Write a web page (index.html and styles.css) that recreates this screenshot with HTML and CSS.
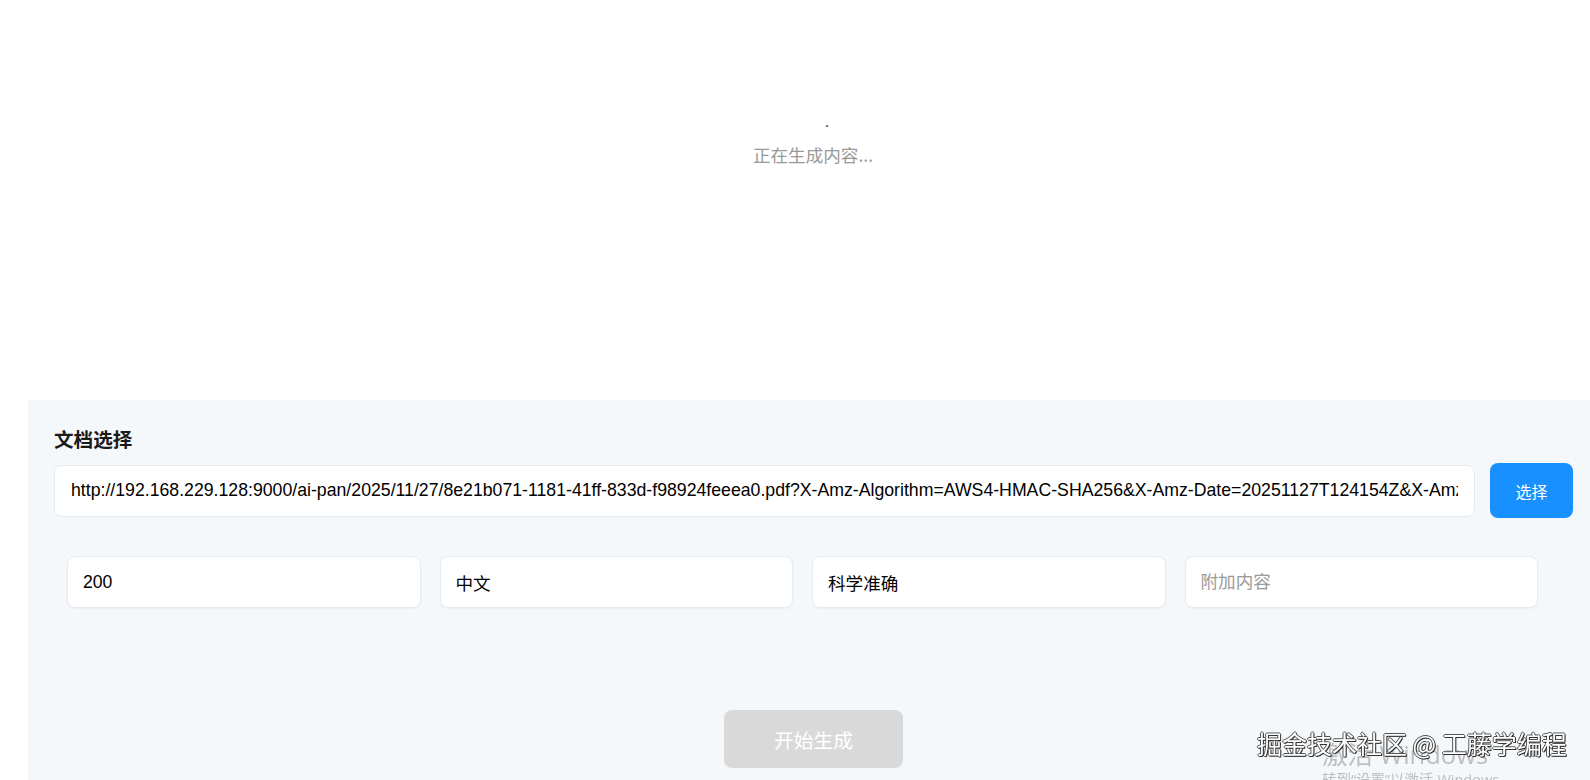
FILE: index.html
```html
<!DOCTYPE html>
<html lang="zh-CN">
<head>
<meta charset="UTF-8" />
<meta name="viewport" content="width=device-width, initial-scale=1" />
<title>生成内容</title>
<link rel="stylesheet" href="styles.css">
</head>
<body>
  <div class="result-area">
    <div class="loading-dots">.</div>
    <div class="loading-text">正在生成内容...</div>
  </div>

  <div class="form-panel">
    <div class="field-label">文档选择</div>
    <div class="doc-row">
      <input class="doc-input" type="text" readonly value="http://192.168.229.128:9000/ai-pan/2025/11/27/8e21b071-1181-41ff-833d-f98924feeea0.pdf?X-Amz-Algorithm=AWS4-HMAC-SHA256&amp;X-Amz-Date=20251127T124154Z&amp;X-Amz-SignedHeaders=host&amp;X-Amz-Expires=3600" />
      <button class="pick-btn">选择</button>
    </div>

    <div class="options-row">
      <input class="opt-input" type="text" value="200" />
      <input class="opt-input" type="text" value="中文" />
      <input class="opt-input" type="text" value="科学准确" />
      <input class="opt-input" type="text" placeholder="附加内容" />
    </div>

    <div class="submit-row">
      <button class="start-btn" disabled>开始生成</button>
    </div>
  </div>

  <div class="wm-juejin">掘金技术社区 @ 工藤学编程</div>
  <div class="wm-activate">
    <div class="wm-title">激活 Windows</div>
    <div class="wm-sub">转到“设置”以激活 Windows。</div>
  </div>
</body>
</html>
```

FILE: styles.css
```css
body {
  font-family: "Liberation Sans", Arial, "Noto Sans CJK SC", sans-serif;
  background: #fff;
  color: #000;
  margin: 0;
  overflow: hidden;
}
.result-area {
  height: 400px;
  box-sizing: border-box;
  margin-left: 28px;
  padding: 110px 0 0 8px;
  text-align: center;
}
.loading-dots {
  font-size: 16px;
  line-height: 24px;
  color: #333;
  padding-left: 28px;
}
.loading-text {
  margin-top: 8px;
  font-family: "Noto Sans CJK SC", sans-serif;
  font-size: 17.6px;
  line-height: 26px;
  color: #999;
}
.form-panel {
  margin-left: 28px;
  background: #f5f8fb;
  padding: 26px 17px 40px 26px;
  height: 500px;
}
.field-label {
  font-family: "Noto Sans CJK SC", sans-serif;
  font-size: 19.6px;
  font-weight: 600;
  line-height: 26px;
  color: #1a1a1a;
}
.doc-row {
  display: flex;
  align-items: center;
  gap: 15px;
  margin-top: 11px;
}
.doc-input {
  flex: 1;
  min-width: 0;
  height: 52px;
  box-sizing: border-box;
  padding: 0 16px;
  border: 1px solid #e6eaef;
  border-radius: 8px;
  background: #fff;
  font-family: "Liberation Sans", Arial, sans-serif;
  font-size: 17.7px;
  color: #000;
  outline: none;
}
.pick-btn {
  width: 83px;
  height: 55px;
  border: none;
  border-radius: 8px;
  background: #1890ff;
  color: #fff;
  font-family: "Noto Sans CJK SC", sans-serif;
  font-size: 16px;
  cursor: pointer;
}
.options-row {
  display: grid;
  grid-template-columns: repeat(4, 1fr);
  gap: 19px;
  margin: 38px 35px 0 13px;
}
.opt-input {
  min-width: 0;
  height: 52px;
  box-sizing: border-box;
  padding: 0 15px;
  border: 1px solid #e8ebef;
  border-radius: 8px;
  background: #fff;
  box-shadow: 0 1px 2px rgba(0, 0, 0, 0.04);
  font-family: "Liberation Sans", Arial, "Noto Sans CJK SC", sans-serif;
  font-size: 17.6px;
  color: #000;
  outline: none;
}
.opt-input::placeholder {
  color: #9a9a9a;
}
.submit-row {
  display: flex;
  justify-content: center;
  margin-top: 102px;
}
.start-btn {
  width: 179px;
  height: 58px;
  border: none;
  border-radius: 8px;
  background: #d9d9d9;
  color: #fff;
  font-family: "Noto Sans CJK SC", sans-serif;
  font-size: 19.8px;
}

/* overlays drawn on top of the page */
.wm-activate {
  position: fixed;
  left: 1322px;
  top: 739px;
  color: rgba(140, 140, 140, 0.55);
  font-family: "Open Sans", "Noto Sans CJK SC", sans-serif;
  white-space: nowrap;
}
.wm-title {
  font-size: 25.5px;
  line-height: 31px;
}
.wm-sub {
  font-size: 14.5px;
  line-height: 20px;
}
.wm-juejin {
  position: fixed;
  left: 1257px;
  top: 728px;
  z-index: 2;
  font-family: "Noto Sans CJK SC", sans-serif;
  font-size: 25px;
  line-height: 30px;
  color: #fff;
  white-space: nowrap;
  text-shadow: 1px 1px 0 #333, -1px 0 0 #555, 0 -1px 0 #555, 1px 0 0 #555, 0 1px 0 #555;
}
```
